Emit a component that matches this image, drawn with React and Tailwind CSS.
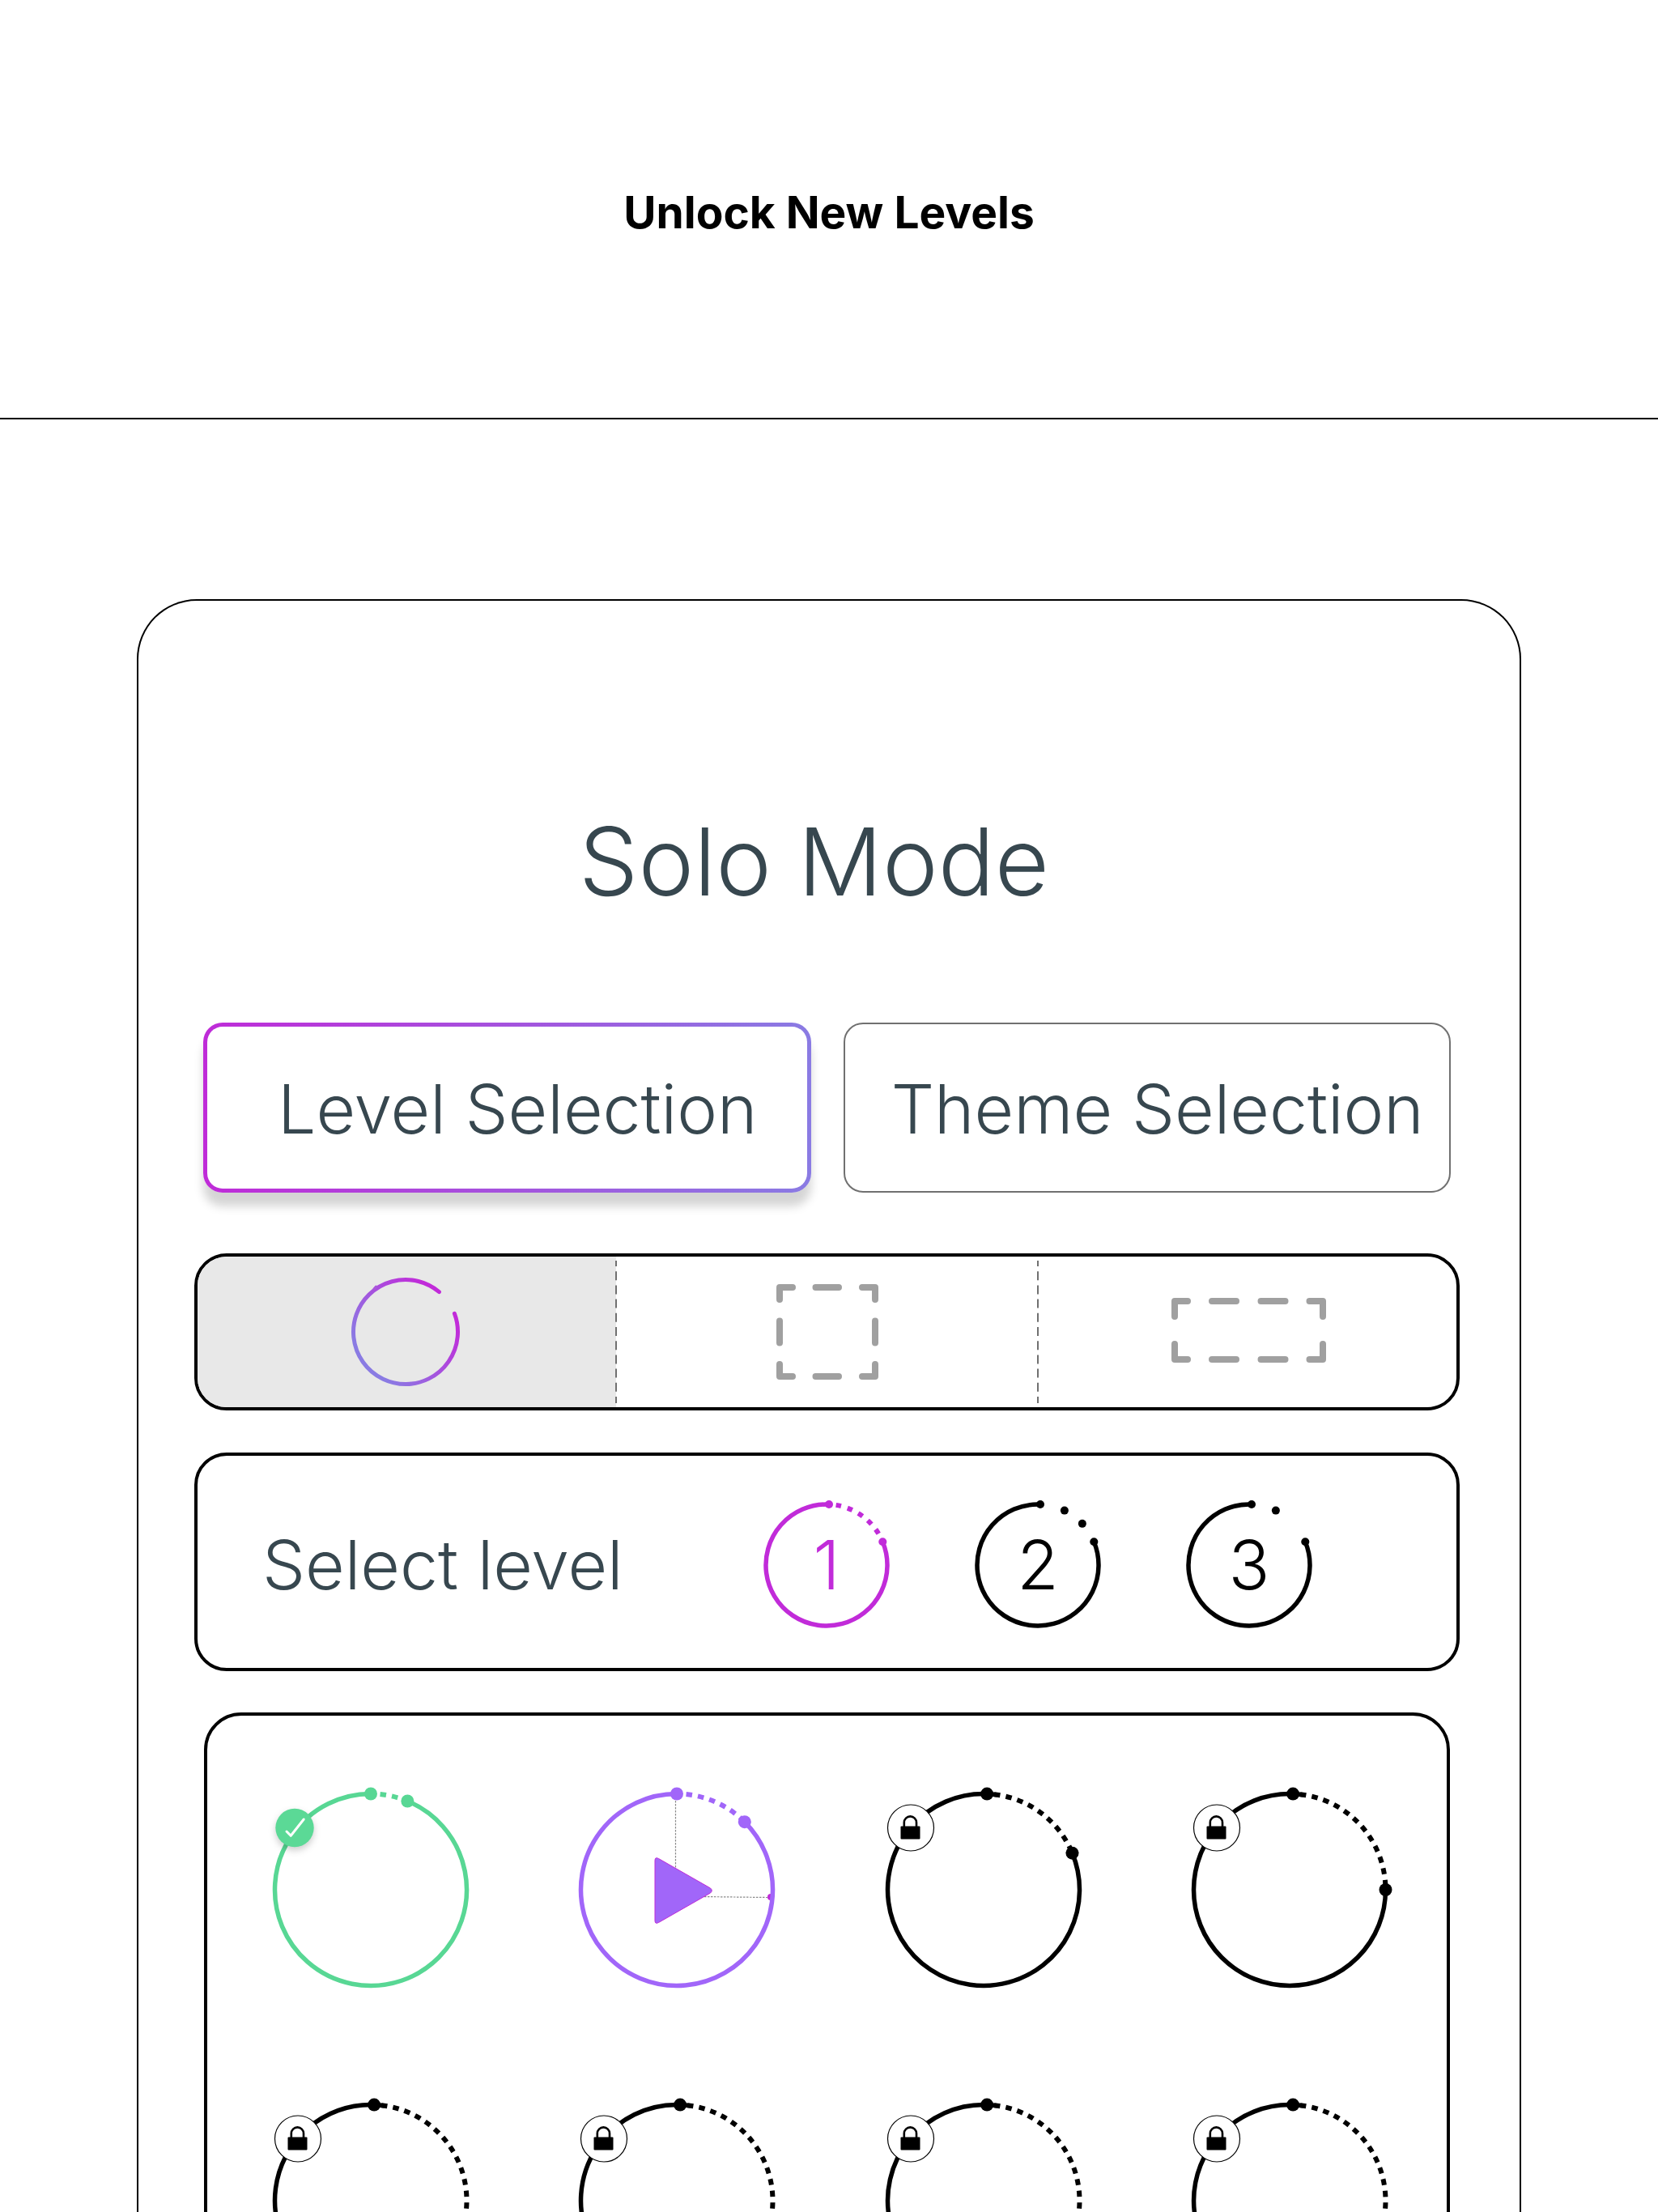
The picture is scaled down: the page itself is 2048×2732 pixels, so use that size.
import React, { useState } from 'react';

const LEVELS = [
   { id: 1, arc: 67.5, dashed: true, dots: [] },
   { id: 2, arc: 67.5, dashed: false, dots: [26, 47] },
   { id: 3, arc: 67.5, dashed: false, dots: [26] },
];

const PUZZLES = [
   { id: 1, status: 'done', arc: 22.5 },
   { id: 2, status: 'current', arc: 45 },
   { id: 3, status: 'locked', arc: 67.5 },
   { id: 4, status: 'locked', arc: 90 },
   { id: 5, status: 'locked', arc: 112.5 },
   { id: 6, status: 'locked', arc: 135 },
   { id: 7, status: 'locked', arc: 157.5 },
   { id: 8, status: 'locked', arc: 180 },
];

// Angles are in degrees, clockwise from 12 o'clock
const polar = (r, angle) => {
   const rad = (angle * Math.PI) / 180;
   return [r * Math.sin(rad), -r * Math.cos(rad)];
};

const arcPath = (r, from, to) => {
   const [x1, y1] = polar(r, from);
   const [x2, y2] = polar(r, to);
   return `M${x1} ${y1}A${r} ${r} 0 ${to - from > 180 ? 1 : 0} 1 ${x2} ${y2}`;
};

function Dot({ r, angle, size }) {
   const [cx, cy] = polar(r, angle);
   return <circle cx={cx} cy={cy} r={size} fill="currentColor" />;
}

function LevelRing({ level }) {
   const r = 75;
   return (
      <svg viewBox="-78 -78 156 156" className="absolute inset-0 h-full w-full overflow-visible" fill="none" stroke="none" aria-hidden="true">
         <path d={arcPath(r, level.arc, 360)} stroke="currentColor" strokeWidth="5.5" />
         {level.dashed && (
            <path d={arcPath(r, 8.9, level.arc - 5)} stroke="currentColor" strokeWidth="6" strokeDasharray="6.5 8.2" />
         )}
         {[2.3, ...level.dots, level.arc].map((angle) => (
            <Dot key={angle} r={r} angle={angle} size={5} />
         ))}
      </svg>
   );
}

function LockBadge() {
   return (
      <g transform="translate(-90 -76.5)">
         <circle r="28.5" fill="white" stroke="black" strokeWidth="1.2" />
         <rect x="-12.5" y="-2" width="24" height="16" rx="1" fill="black" />
         <path d="M-8.2 -1V-6.5A7.5 7.5 0 0 1 7 -6.5V-1" stroke="black" strokeWidth="2.6" />
      </g>
   );
}

function DoneBadge() {
   return (
      <g transform="translate(-94 -76.5)">
         <circle r="23.7" fill="#5bd996" className="drop-shadow-[0_4px_4px_rgba(0,0,0,0.2)]" />
         <path d="M-10 4.5L-4.8 9.8L11.2 -10.5" stroke="white" strokeWidth="3" strokeLinecap="round" strokeLinejoin="round" />
      </g>
   );
}

function PlayMark() {
   return (
      <>
         <g stroke="#8a8a8a" strokeWidth="1.2" strokeDasharray="2.5 1.5">
            <path d="M-1.5 -110V-20" />
            <path d="M30 8.5L112 9.5" />
         </g>
         <path d="M-27 -36Q-27 -41 -22.5 -38.5L41.5 -2Q45 1 41.5 4L-22.5 40.5Q-27 43 -27 38Z" fill="#a166f9" stroke="#bf2bd8" strokeWidth="1" />
         <path d="M116 5A4 4 0 0 0 116 13Z" fill="#bf2bd8" />
      </>
   );
}

function PuzzleRing({ puzzle }) {
   const r = 118.5;
   const locked = puzzle.status === 'locked';
   return (
      <svg viewBox="-121 -121 242 242" className="h-[242px] w-[242px] overflow-visible" fill="none" aria-hidden="true">
         {puzzle.status === 'current' && <PlayMark />}
         <path d={arcPath(r, puzzle.arc, 360)} stroke="currentColor" strokeWidth="5.5" />
         <path d={arcPath(r, locked ? 6.3 : 5.6, puzzle.arc - 3)} stroke="currentColor" strokeWidth="6" strokeDasharray="7.5 7.1" />
         {locked && <path d={arcPath(r, 0, 8)} stroke="currentColor" strokeWidth="5.5" />}
         <Dot r={r} angle={locked ? 2 : 0} size={8} />
         <Dot r={r} angle={puzzle.arc} size={8} />
         {locked && <LockBadge />}
         {puzzle.status === 'done' && <DoneBadge />}
      </svg>
   );
}

function CircleShape() {
   return (
      <svg viewBox="-67 -67 134 134" className="h-[134px] w-[134px] overflow-visible" fill="none" strokeLinecap="round" aria-hidden="true">
         <defs>
            <linearGradient id="shape-gradient" gradientUnits="userSpaceOnUse" x1="-47" y1="33" x2="41" y2="-37">
               <stop offset="0" stopColor="#8a7be3" />
               <stop offset="1" stopColor="#c12bd9" />
            </linearGradient>
         </defs>
         <path d={arcPath(64.5, 69.5, 400)} stroke="url(#shape-gradient)" strokeWidth="5" />
         <path d="M-39 -53L-36.5 -56" stroke="#a957da" strokeWidth="3" />
      </svg>
   );
}

function SquareShape() {
   return (
      <svg viewBox="0 0 126 118" className="h-[118px] w-[126px]" fill="none" stroke="#a0a0a0" strokeWidth="8" strokeLinecap="round" strokeLinejoin="round" aria-hidden="true">
         <path d="M20 4H4V19M48.5 4H77M106 4H122V19M4 45.5V72.5M122 45.5V72.5M4 99V114H20M48.5 114H77M106 114H122V99" />
      </svg>
   );
}

function WideShape() {
   return (
      <svg viewBox="0 0 191 84" className="h-[84px] w-[191px]" fill="none" stroke="#a0a0a0" strokeWidth="8" strokeLinecap="round" strokeLinejoin="round" aria-hidden="true">
         <path d="M20 4H4V23M50 4H80M110.5 4H140.5M170.5 4H187V23M4 57V76H20M50 76H80M110.5 76H140.5M170.5 76H187V57" />
      </svg>
   );
}

function Separator() {
   return (
      <svg className="absolute inset-y-[5px] -right-px h-[calc(100%-10px)] w-0.5" aria-hidden="true">
         <line x1="1" y1="0" x2="1" y2="100%" stroke="#707070" strokeWidth="2" strokeDasharray="11 6.2" strokeDashoffset="4" />
      </svg>
   );
}

const SHAPES = [
   { id: 'circle', label: 'Circle', Icon: CircleShape },
   { id: 'square', label: 'Square', Icon: SquareShape },
   { id: 'wide', label: 'Rectangle', Icon: WideShape },
];

const TABS = ['Level Selection', 'Theme Selection'];

const RING_COLORS = {
   done: 'text-[#58d794]',
   current: 'text-[#a166f9]',
   locked: 'text-black',
};

export default function App() {
   const [tab, setTab] = useState('Level Selection');
   const [shape, setShape] = useState('circle');
   const [level, setLevel] = useState(1);

   return (
      <div className="h-screen overflow-hidden bg-white font-['Century_Gothic','Inter',sans-serif] font-light text-[#37474f]">

         {/* Header */}
         <header className="flex h-[518px] items-center justify-center border-b-2 border-black pt-2">
            <h1 className="text-[55px] leading-[64px] font-bold text-black">Unlock New Levels</h1>
         </header>

         {/* Game panel */}
         <main className="mx-[169px] mt-[222px] rounded-t-[74px] border-2 border-b-0 border-black pt-[262px] pr-[74px] pl-[69px]">
            <h2 className="pr-8 text-center text-[116px] leading-[120px] font-light">Solo Mode</h2>

            {/* Tabs */}
            <div className="mx-[11px] mt-[139px] grid grid-cols-2 gap-10">
               {TABS.map((name) => (
                  <button
                     key={name}
                     onClick={() => setTab(name)}
                     className={`h-[210px] rounded-3xl pt-1 pl-[26px] text-[84px] leading-[96px] whitespace-nowrap ${
                        tab === name
                           ? 'border-[5px] border-transparent shadow-[0_17px_12px_rgba(0,0,0,0.17)] [background:linear-gradient(white,white)_padding-box,linear-gradient(to_right,#bf2bd8,#8a7be3)_border-box]'
                           : 'border-2 border-[#707070]'
                     }`}
                  >
                     {name}
                  </button>
               ))}
            </div>

            {/* Shape picker */}
            <div className="mt-[75px] h-[194px] overflow-hidden rounded-[40px] border-4 border-black">
               <div className="-mx-1 grid h-full grid-cols-3">
                  {SHAPES.map(({ id, label, Icon }, i) => (
                     <button
                        key={id}
                        onClick={() => setShape(id)}
                        aria-label={label}
                        className={`relative flex items-center justify-center ${shape === id ? 'bg-[#e8e8e8]' : ''}`}
                     >
                        <Icon />
                        {i < SHAPES.length - 1 && <Separator />}
                     </button>
                  ))}
               </div>
            </div>

            {/* Level picker */}
            <div className="mt-[52px] flex h-[270px] items-center justify-between rounded-[40px] border-4 border-black pt-2 pr-[178px] pl-20">
               <span className="text-[84px] leading-[96px]">Select level</span>
               <div className="flex gap-[105px]">
                  {LEVELS.map((item) => (
                     <button
                        key={item.id}
                        onClick={() => setLevel(item.id)}
                        className={`relative h-[156px] w-[156px] text-[84px] leading-[96px] ${level === item.id ? 'text-[#c12bd9]' : 'text-black'}`}
                     >
                        <LevelRing level={item} />
                        {item.id}
                     </button>
                  ))}
               </div>
            </div>

            {/* Puzzles */}
            <div className="mx-3 mt-[51px] grid grid-cols-4 gap-y-[142px] rounded-[46px] border-4 border-black pt-[94px] pr-[5px] pb-24 pl-[13px]">
               {PUZZLES.map((puzzle) => (
                  <button
                     key={puzzle.id}
                     aria-label={`Puzzle ${puzzle.id}`}
                     className={`flex justify-center ${RING_COLORS[puzzle.status]}`}
                  >
                     <PuzzleRing puzzle={puzzle} />
                  </button>
               ))}
            </div>
         </main>
      </div>
   );
}
